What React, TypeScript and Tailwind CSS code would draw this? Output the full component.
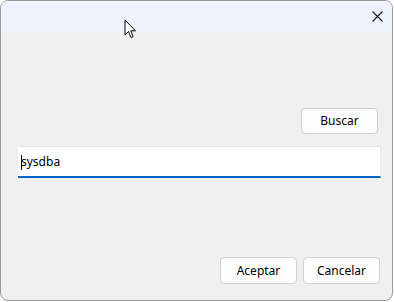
import React from "react";

export default function App() {
  const font = { fontFamily: '"Segoe UI", "Noto Sans", "Open Sans", sans-serif' };
  return (
    <div className="w-[394px] h-[302px] bg-white relative" style={font}>
      <div className="w-[393px] h-[301px] border border-[#9a9a9a] rounded-[8px] overflow-hidden flex flex-col bg-[#f0f0f0]">
        <div className="h-[31px] bg-[#eef2fb] flex items-center justify-end pr-[9px] shrink-0">
          <svg width="11" height="11" viewBox="0 0 11 11" className="mb-[1px]">
            <path d="M0.5 0.5 L10.5 10.5 M10.5 0.5 L0.5 10.5" stroke="#1a1a1a" strokeWidth="1.1" fill="none" />
          </svg>
        </div>
        <div className="flex-1 flex flex-col pl-[17px] pr-[11px]">
          <div className="flex justify-end pt-[76px] pr-[3px]">
            <button className="w-[77px] h-[26px] bg-[#fdfdfd] border border-[#d0d0d0] rounded-[4px] text-[12px] text-black leading-none">
              Buscar
            </button>
          </div>
          <div className="mt-[12px] h-[32px] w-[363px] bg-white border-t border-r border-[#e6e6e6] border-b-2 border-b-[#0067c0] flex items-center pl-[2px] relative">
            <span className="absolute left-[3px] top-[8px] w-[1px] h-[15px] bg-black" />
            <span className="text-[12px] text-black leading-none pl-[1px]">sysdba</span>
          </div>
          <div className="flex-1" />
          <div className="flex justify-end gap-[6px] pb-[16px] pr-[1px]">
            <button className="w-[77px] h-[27px] bg-[#fdfdfd] border border-[#d0d0d0] rounded-[4px] text-[12px] text-black leading-none">
              Aceptar
            </button>
            <button className="w-[77px] h-[27px] bg-[#fdfdfd] border border-[#d0d0d0] rounded-[4px] text-[12px] text-black leading-none">
              Cancelar
            </button>
          </div>
        </div>
      </div>
      <svg className="absolute left-[124px] top-[19px]" width="14" height="21" viewBox="0 0 14 21">
        <path d="M1 1 L1 16 L4.5 12.5 L7 18.5 L9.2 17.6 L6.8 11.8 L11.5 11.8 Z" fill="white" stroke="black" strokeWidth="1" strokeLinejoin="miter" />
      </svg>
    </div>
  );
}
